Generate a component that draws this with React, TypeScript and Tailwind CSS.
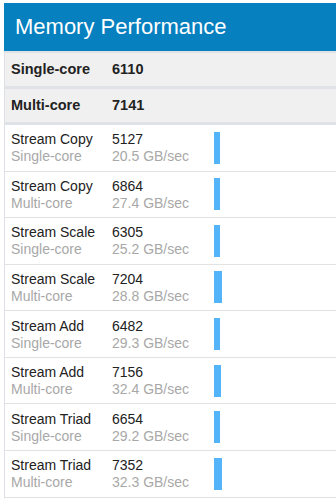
import React from 'react';

const summary = [
  { label: 'Single-core', score: '6110' },
  { label: 'Multi-core', score: '7141' },
];

const tests = [
  { name: 'Stream Copy', core: 'Single-core', score: '5127', rate: '20.5 GB/sec', bar: 6 },
  { name: 'Stream Copy', core: 'Multi-core', score: '6864', rate: '27.4 GB/sec', bar: 6 },
  { name: 'Stream Scale', core: 'Single-core', score: '6305', rate: '25.2 GB/sec', bar: 6 },
  { name: 'Stream Scale', core: 'Multi-core', score: '7204', rate: '28.8 GB/sec', bar: 8 },
  { name: 'Stream Add', core: 'Single-core', score: '6482', rate: '29.3 GB/sec', bar: 6 },
  { name: 'Stream Add', core: 'Multi-core', score: '7156', rate: '32.4 GB/sec', bar: 7 },
  { name: 'Stream Triad', core: 'Single-core', score: '6654', rate: '29.2 GB/sec', bar: 6 },
  { name: 'Stream Triad', core: 'Multi-core', score: '7352', rate: '32.3 GB/sec', bar: 8 },
];

const App = () => {
  return <div className="w-[336px] h-[500px] overflow-hidden bg-white pt-[3px] pl-[4px]" style={{ fontFamily: '"Liberation Sans", Arial, sans-serif' }}>
      <div className="w-[400px] border-l border-[#dde1e5]">
        {/* Title bar */}
        <div className="h-[48px] bg-[#0780c0] flex items-center pl-[11px] -ml-px">
          <h2 className="text-[22px] leading-none text-white">Memory Performance</h2>
        </div>
        <div className="h-[2px] bg-[#dfe3e7]" />

        {/* Overall scores */}
        {summary.map((s, i) => <div key={i} className={`grid grid-cols-[101px_102px_1fr] items-center pl-[6px] bg-[#f0f0f0] border-b-[3px] border-[#dfe2e6] text-[14.5px] font-bold text-[#222] ${i === 0 ? 'h-[36px]' : 'h-[36px] border-b-4'}`}>
            <span>{s.label}</span>
            <span>{s.score}</span>
            <span />
          </div>)}

        {/* Workloads */}
        {tests.map((t, i) => <div key={i} className="grid grid-cols-[101px_102px_1fr] items-center pl-[6px] h-[46.57px] border-b border-[#e2e2e2] text-[14px] leading-[17px]">
            <div className="flex flex-col pt-px">
              <span className="text-[#222]">{t.name}</span>
              <span className="text-[#a8a8a8]">{t.core}</span>
            </div>
            <div className="flex flex-col pt-px">
              <span className="text-[#222]">{t.score}</span>
              <span className="text-[#a8a8a8]">{t.rate}</span>
            </div>
            <div className="flex items-center">
              <div className="h-[32px] bg-[#54b4fa]" style={{ width: t.bar }} />
            </div>
          </div>)}
      </div>
    </div>;
};

export default App;
